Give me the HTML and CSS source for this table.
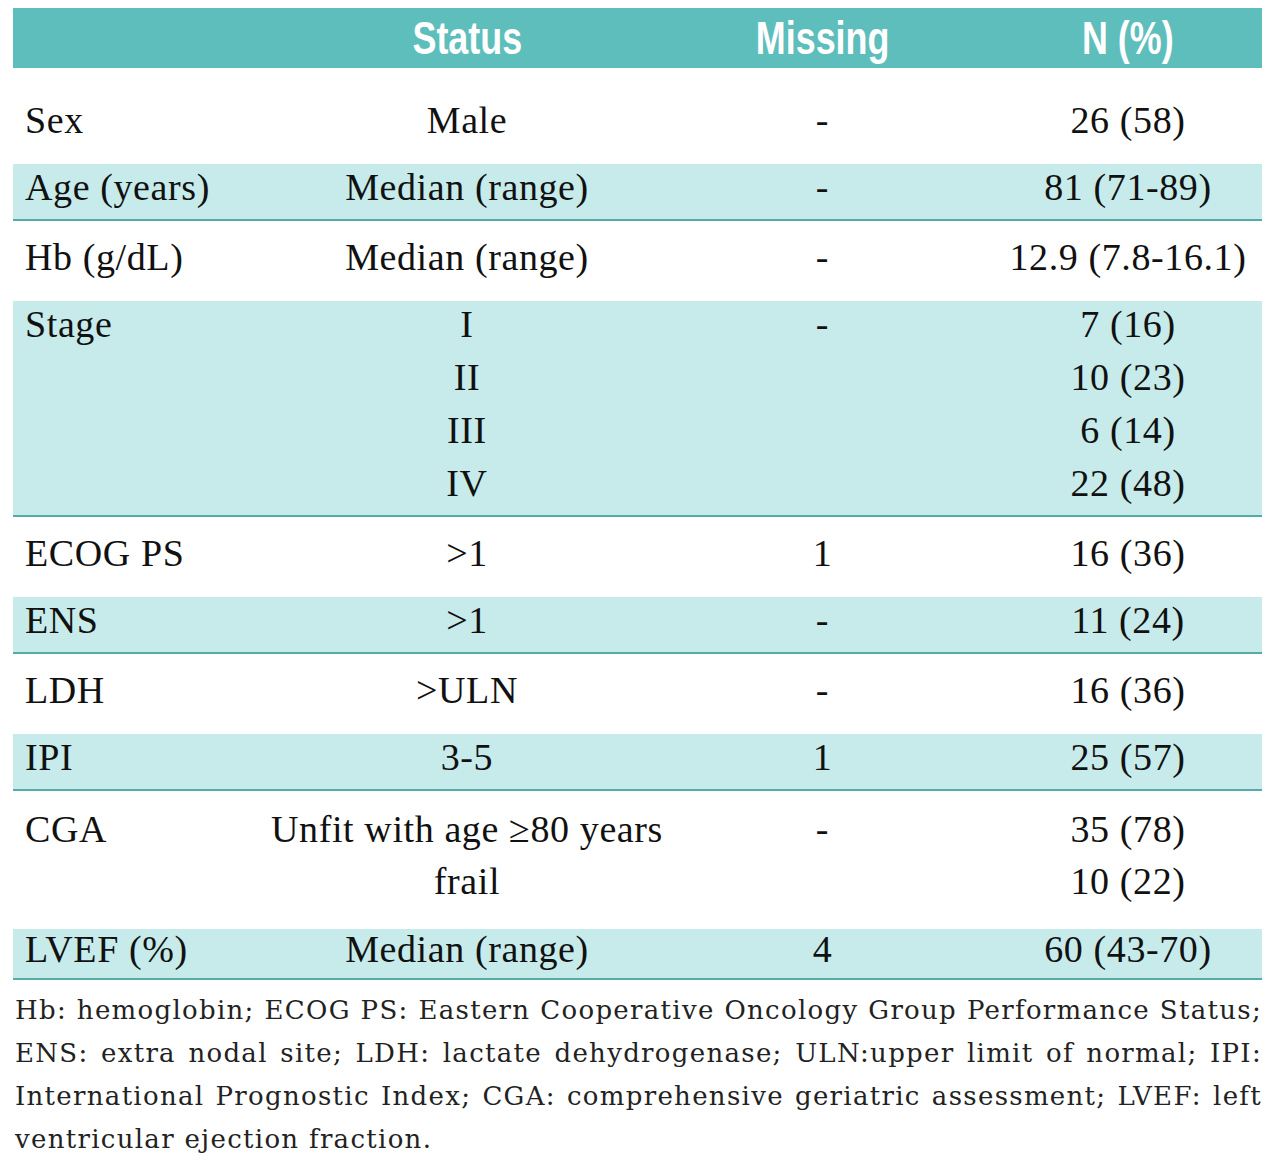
FILE: index.html
```html
<!DOCTYPE html>
<html lang="en">
<head>
<meta charset="utf-8">
<title>Patient characteristics</title>
<link rel="stylesheet" href="styles.css">
</head>
<body>
<div class="wrap">
  <table class="tbl">
    <colgroup>
      <col class="c1"><col class="c2"><col class="c3"><col class="c4">
    </colgroup>
    <thead>
      <tr>
        <th></th>
        <th><span class="hd">Status</span></th>
        <th class="miss"><span class="hd">Missing</span></th>
        <th><span class="hd">N (%)</span></th>
      </tr>
    </thead>
    <tbody>
      <tr class="first">
        <td class="lbl">Sex</td><td>Male</td><td class="miss">-</td><td>26 (58)</td>
      </tr>
      <tr class="alt">
        <td class="lbl">Age (years)</td><td>Median (range)</td><td class="miss">-</td><td>81 (71-89)</td>
      </tr>
      <tr>
        <td class="lbl">Hb (g/dL)</td><td>Median (range)</td><td class="miss">-</td><td>12.9 (7.8-16.1)</td>
      </tr>
      <tr class="alt">
        <td class="lbl">Stage</td>
        <td><div class="ln">I</div><div class="ln">II</div><div class="ln">III</div><div class="ln">IV</div></td>
        <td class="miss">-</td>
        <td><div class="ln">7 (16)</div><div class="ln">10 (23)</div><div class="ln">6 (14)</div><div class="ln">22 (48)</div></td>
      </tr>
      <tr>
        <td class="lbl">ECOG PS</td><td>&gt;1</td><td class="miss">1</td><td>16 (36)</td>
      </tr>
      <tr class="alt">
        <td class="lbl">ENS</td><td>&gt;1</td><td class="miss">-</td><td>11 (24)</td>
      </tr>
      <tr>
        <td class="lbl">LDH</td><td>&gt;ULN</td><td class="miss">-</td><td>16 (36)</td>
      </tr>
      <tr class="alt">
        <td class="lbl">IPI</td><td>3-5</td><td class="miss">1</td><td>25 (57)</td>
      </tr>
      <tr class="tall">
        <td class="lbl">CGA</td>
        <td><div class="ln">Unfit with age ≥80 years</div><div class="ln">frail</div></td>
        <td class="miss">-</td>
        <td><div class="ln">35 (78)</div><div class="ln">10 (22)</div></td>
      </tr>
      <tr class="alt last">
        <td class="lbl">LVEF (%)</td><td>Median (range)</td><td class="miss">4</td><td>60 (43-70)</td>
      </tr>
    </tbody>
  </table>
  <p class="note">Hb: hemoglobin; ECOG PS: Eastern Cooperative Oncology Group Performance Status; ENS: extra nodal site; LDH: lactate dehydrogenase; ULN:upper limit of normal; IPI: International Prognostic Index; CGA: comprehensive geriatric assessment; LVEF: left ventricular ejection fraction.</p>
</div>
</body>
</html>
```
FILE: styles.css
```css
html, body {
  margin: 0;
  padding: 0;
  background: #ffffff;
}

.wrap {
  padding: 8px 18px 0 13px;
  width: 1249px;
}

.tbl {
  width: 1249px;
  table-layout: fixed;
  border-collapse: collapse;
  border-spacing: 0;
  font-family: "Liberation Serif", "Times New Roman", serif;
  font-size: 38px;
  letter-spacing: 0.6px;
  color: #111111;
}

.c1 { width: 252px; }
.c2 { width: 404px; }
.c3 { width: 325px; }
.c4 { width: 268px; }

.tbl th {
  height: 60px;
  padding: 0;
  background: #5ebebc;
  color: #ffffff;
  font-family: "Liberation Sans Narrow", "Liberation Sans", Arial, sans-serif;
  font-weight: bold;
  font-size: 46px;
  letter-spacing: 0;
  line-height: 60px;
  text-align: center;
  vertical-align: middle;
  white-space: nowrap;
}

.hd {
  display: inline-block;
  transform: scaleX(0.78);
}

.tbl td {
  padding: 16px 0 24px;
  line-height: 40px;
  text-align: center;
  vertical-align: top;
  white-space: nowrap;
}

.tbl td.lbl {
  text-align: left;
  padding-left: 12px;
}

.tbl .miss {
  padding-right: 18px;
}

.tbl tr.first td {
  padding-top: 32px;
}

.tbl tr.alt td {
  background: #c6ebea;
  padding-top: 3px;
  padding-bottom: 12px;
  border-bottom: 2px solid #55aba7;
}

.tbl tr.last td {
  padding-top: 0;
  padding-bottom: 9px;
}

.tbl tr.tall td {
  padding-top: 18px;
  padding-bottom: 28px;
}

.ln + .ln {
  margin-top: 13px;
}

.tbl tr.tall .ln + .ln {
  margin-top: 12px;
}

.note {
  margin: 9px 0 0 2px;
  width: 1247px;
  font-family: "DejaVu Serif", "Liberation Serif", serif;
  font-size: 26px;
  letter-spacing: 1.3px;
  line-height: 43px;
  color: #222222;
  text-align: justify;
}
```
